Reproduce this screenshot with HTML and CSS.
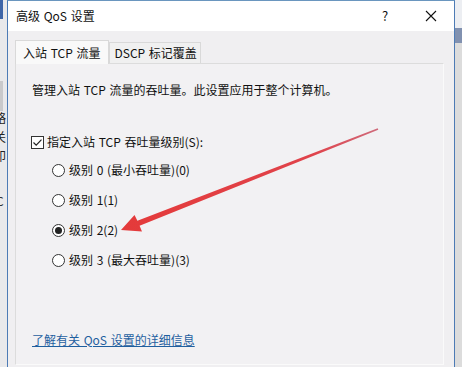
FILE: index.html
```html
<!DOCTYPE html>
<html lang="zh-CN">
<head>
<meta charset="utf-8">
<title>高级 QoS 设置</title>
<link rel="stylesheet" href="styles.css">
</head>
<body>
<div class="screen">
  <div class="bg-left">
    <div class="bl-blue"></div>
    <div class="bl-gray"></div>
    <div class="bl-text">略<br>关<br>印</div>
    <div class="bl-c">C</div>
  </div>
  <div class="dialog">
    <div class="titlebar">
      <span class="title">高级 QoS 设置</span>
      <div class="caption-btns">
        <span class="cbtn">?</span>
        <span class="cbtn"><svg width="12" height="12" viewBox="0 0 12 12"><path d="M1 1L11 11M11 1L1 11" stroke="#111" stroke-width="1.1" fill="none"/></svg></span>
      </div>
    </div>
    <div class="body">
      <div class="tabs">
        <div class="tab active">入站 TCP 流量</div>
        <div class="tab">DSCP 标记覆盖</div>
      </div>
      <div class="panel">
        <p class="desc">管理入站 TCP 流量的吞吐量。此设置应用于整个计算机。</p>
        <div class="check">
          <svg class="box" width="13" height="13" viewBox="0 0 13 13"><rect x="0.5" y="0.5" width="12" height="12" fill="#fff" stroke="#333"/><path d="M2.5 6.5L5.2 9.2L10.5 3.6" stroke="#222" stroke-width="1.2" fill="none"/></svg>
          <span>指定入站 TCP 吞吐量级别(S):</span>
        </div>
        <div class="radios">
          <div class="radio"><svg width="13" height="13" viewBox="0 0 13 13"><circle cx="6.5" cy="6.5" r="6" fill="#fff" stroke="#333"/></svg><span>级别 0 (最小吞吐量)(0)</span></div>
          <div class="radio"><svg width="13" height="13" viewBox="0 0 13 13"><circle cx="6.5" cy="6.5" r="6" fill="#fff" stroke="#333"/></svg><span>级别 1(1)</span></div>
          <div class="radio"><svg width="13" height="13" viewBox="0 0 13 13"><circle cx="6.5" cy="6.5" r="6" fill="#fff" stroke="#333"/><circle cx="6.5" cy="6.5" r="3.5" fill="#222"/></svg><span>级别 2(2)</span></div>
          <div class="radio"><svg width="13" height="13" viewBox="0 0 13 13"><circle cx="6.5" cy="6.5" r="6" fill="#fff" stroke="#333"/></svg><span>级别 3 (最大吞吐量)(3)</span></div>
        </div>
        <a class="link" href="#">了解有关 QoS 设置的详细信息</a>
      </div>
    </div>
  </div>
  <div class="bg-right">
    <div class="br-top"></div>
    <div class="br-bar"></div>
  </div>
  <svg class="arrow" width="462" height="367" viewBox="0 0 462 367">
    <defs>
      <linearGradient id="ag" x1="121" y1="230" x2="378" y2="129" gradientUnits="userSpaceOnUse">
        <stop offset="0" stop-color="#e43a3a"/>
        <stop offset="0.75" stop-color="#e0434b"/>
        <stop offset="1" stop-color="#cf6a7a"/>
      </linearGradient>
    </defs>
    <polygon points="121,230 142,231.5 139.6,225.8 378.3,129.8 377.7,128.3 137.4,220.8 134.5,215" fill="url(#ag)"/>
  </svg>
</div>
</body>
</html>
```

FILE: styles.css
```css
html, body {
  margin: 0;
  padding: 0;
}
body {
  font-family: "Noto Sans CJK SC", "Noto Sans", sans-serif;
  font-size: 12px;
  line-height: 16px;
  color: #111;
  background: #e6e6e6;
}
.screen {
  position: relative;
  width: 462px;
  height: 367px;
  overflow: hidden;
  display: flex;
}
.bg-left {
  width: 7px;
  flex: none;
  background: #e9e9eb;
  overflow: hidden;
  display: flex;
  flex-direction: column;
}
.bl-blue {
  width: 3px;
  height: 19px;
  background: #3f66a8;
}
.bl-gray {
  width: 3px;
  height: 30px;
  margin-top: 62px;
  background: #c9c9cb;
}
.bl-text {
  margin-top: -3px;
  margin-left: -6px;
  font-size: 12px;
  line-height: 19px;
  color: #222;
}
.bl-c {
  margin-top: 28px;
  margin-left: -4px;
  font-size: 12px;
  color: #333;
}
.dialog {
  width: 448px;
  flex: none;
  box-sizing: border-box;
  border-left: 1px solid #4d7bb5;
  border-right: 1px solid #4d7bb5;
  border-top: 1px solid #6a96bf;
  background: #f0eff1;
  display: flex;
  flex-direction: column;
  word-spacing: 1px;
}
.titlebar {
  height: 30px;
  background: #fff;
  display: flex;
  align-items: center;
  padding-left: 8px;
}
.title {
  flex: 1;
  color: #111;
}
.caption-btns {
  display: flex;
  height: 30px;
}
.cbtn {
  width: 46px;
  height: 30px;
  display: flex;
  align-items: center;
  justify-content: center;
  font-size: 13px;
}
.body {
  flex: 1;
  padding: 9px 10px 0 7px;
}
.tabs {
  display: flex;
  align-items: flex-end;
  height: 23px;
}
.tab {
  box-sizing: border-box;
  height: 21px;
  padding: 0 3px 0 5px;
  border: 1px solid #d9d9d9;
  border-bottom: none;
  background: #f0f0f0;
  display: flex;
  align-items: center;
  margin-left: -1px;
}
.tab.active {
  height: 24px;
  margin-left: 0;
  margin-bottom: -1px;
  padding: 0 7px 0 7px;
  background: #f9f9f9;
  position: relative;
  z-index: 1;
  margin-right: 1px;
}
.panel {
  box-sizing: border-box;
  height: 302px;
  border: 1px solid #dcdcdc;
  border-right-color: #fafafa;
  border-bottom-color: #fafafa;
  background: #f2f1f3;
  padding: 18px 16px 16px;
  display: flex;
  flex-direction: column;
}
.desc {
  margin: 0;
}
.check {
  margin-top: 36px;
  display: flex;
  align-items: center;
  gap: 3px;
  margin-left: -1px;
}
.radios {
  margin-top: 5px;
  padding-left: 20px;
  display: flex;
  flex-direction: column;
}
.radio {
  height: 30px;
  display: flex;
  align-items: center;
  gap: 4px;
}
.link {
  margin-top: auto;
  align-self: flex-start;
  color: #1f5f9f;
  text-decoration: underline;
}
.bg-right {
  width: 7px;
  flex: none;
  background: #dcdcdc;
  display: flex;
  flex-direction: column;
}
.br-top {
  height: 28px;
  background: #eceef2;
}
.br-bar {
  height: 15px;
  background: #8191b0;
}
.arrow {
  position: absolute;
  left: 0;
  top: 0;
  pointer-events: none;
}
```
